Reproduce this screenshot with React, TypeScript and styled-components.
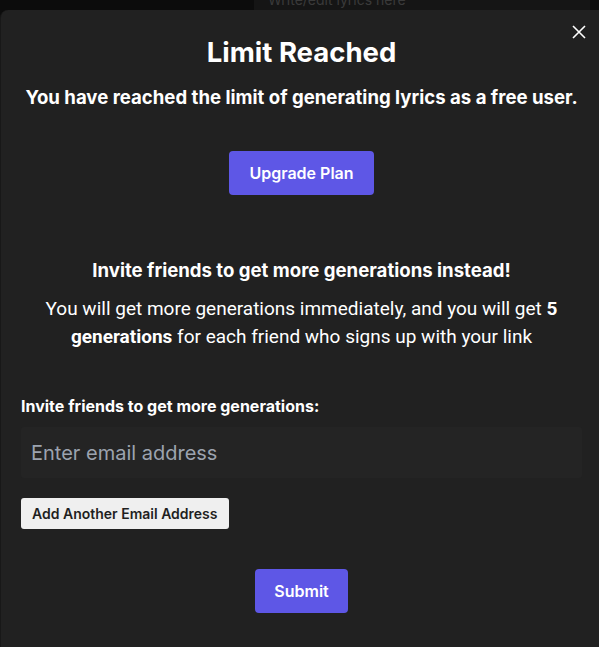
import React, { FC, useState } from 'react';
import styled, { createGlobalStyle } from 'styled-components';

const GlobalStyle = createGlobalStyle`
  html, body {
    margin: 0;
    padding: 0;
    background: #0c0c0c;
    font-family: Inter, "Noto Sans", sans-serif;
    overflow: hidden;
  }
`;

const App: FC = () => {
  const [emails, setEmails] = useState<string[]>(['']);

  const handleAdd = () => {
    setEmails([...emails, '']);
  };

  return (
    <Page>
      <GlobalStyle />
      <Backdrop>
        <LyricsBox>Write/edit lyrics here</LyricsBox>
      </Backdrop>
      <Modal>
        <CloseButton aria-label="Close">
          <svg width="16" height="16" viewBox="0 0 16 16">
            <path d="M2 2 L14 14 M14 2 L2 14" stroke="#fff" strokeWidth="1.6" />
          </svg>
        </CloseButton>
        <Title>Limit Reached</Title>
        <Subtitle>You have reached the limit of generating lyrics as a free user.</Subtitle>
        <PrimaryButton wide>Upgrade Plan</PrimaryButton>
        <InviteHeading>Invite friends to get more generations instead!</InviteHeading>
        <Paragraph>
          You will get more generations immediately, and you will get <b>5 generations</b> for
          each friend who signs up with your link
        </Paragraph>
        <Form>
          <Label>Invite friends to get more generations:</Label>
          {emails.map((value, i) => (
            <EmailInput
              key={i}
              placeholder="Enter email address"
              value={value}
              onChange={(e) => {
                const next = [...emails];
                next[i] = e.target.value;
                setEmails(next);
              }}
            />
          ))}
          <AddButton onClick={handleAdd}>Add Another Email Address</AddButton>
          <PrimaryButton>Submit</PrimaryButton>
        </Form>
      </Modal>
    </Page>
  );
};

const Page = styled.div`
  width: 599px;
  height: 647px;
  display: flex;
  flex-direction: column;
  overflow: hidden;
`;

const Backdrop = styled.div`
  height: 10px;
  display: flex;
  justify-content: flex-end;
`;

const LyricsBox = styled.div`
  width: 308px;
  margin-right: 9px;
  padding: 0 14px;
  background: #151515;
  color: #3a3a3a;
  font-size: 14px;
  line-height: 0;
  overflow: hidden;
`;

const Modal = styled.div`
  position: relative;
  flex: 1;
  margin-right: -10px;
  background: #212121;
  border-radius: 8px 8px 0 0;
  border-left: 1px solid #181818;
  padding: 26px 27px 0 20px;
  display: flex;
  flex-direction: column;
  align-items: center;
  color: #fff;
`;

const CloseButton = styled.button`
  position: absolute;
  top: 14px;
  right: 22px;
  background: none;
  border: none;
  padding: 0;
  cursor: pointer;
  display: flex;
`;

const Title = styled.h2`
  margin: 0;
  font-size: 27.5px;
  font-weight: 700;
  line-height: 32px;
`;

const Subtitle = styled.p`
  margin: 16px 0 0;
  font-size: 18.6px;
  font-weight: 700;
  line-height: 26px;
  text-align: center;
  white-space: nowrap;
`;

const PrimaryButton = styled.button<{ wide?: boolean }>`
  margin-top: ${(props) => (props.wide ? '41px' : '40px')};
  height: 44px;
  padding: 0 ${(props) => (props.wide ? '20px' : '19px')};
  background: #5e57e6;
  color: #fff;
  border: none;
  border-radius: 4px;
  font-family: Inter, sans-serif;
  font-size: 16px;
  font-weight: 600;
  cursor: pointer;
  align-self: center;
`;

const InviteHeading = styled.h3`
  margin: 62px 0 0;
  font-size: 18.6px;
  font-weight: 700;
  line-height: 26px;
  text-align: center;
`;

const Paragraph = styled.p`
  margin: 12px 0 0;
  font-family: Roboto, sans-serif;
  font-size: 19px;
  line-height: 28px;
  text-align: center;
  padding: 0 20px;
  b {
    font-weight: 700;
  }
`;

const Form = styled.div`
  align-self: stretch;
  margin-top: 45px;
  display: flex;
  flex-direction: column;
  align-items: flex-start;
`;

const Label = styled.label`
  font-size: 16px;
  font-weight: 700;
  line-height: 20px;
`;

const EmailInput = styled.input`
  margin-top: 11px;
  width: 100%;
  box-sizing: border-box;
  height: 51px;
  background: #242424;
  border: none;
  border-radius: 3px;
  padding: 0 10px;
  color: #fff;
  font-family: Inter, sans-serif;
  font-size: 20px;
  outline: none;
  &::placeholder {
    color: #9ca3af;
  }
`;

const AddButton = styled.button`
  margin-top: 20px;
  height: 31px;
  padding: 0 11px;
  background: #efefef;
  color: #1f1f1f;
  border: none;
  border-radius: 3px;
  font-family: Inter, sans-serif;
  font-size: 14px;
  font-weight: 600;
  cursor: pointer;
`;

export default App;
